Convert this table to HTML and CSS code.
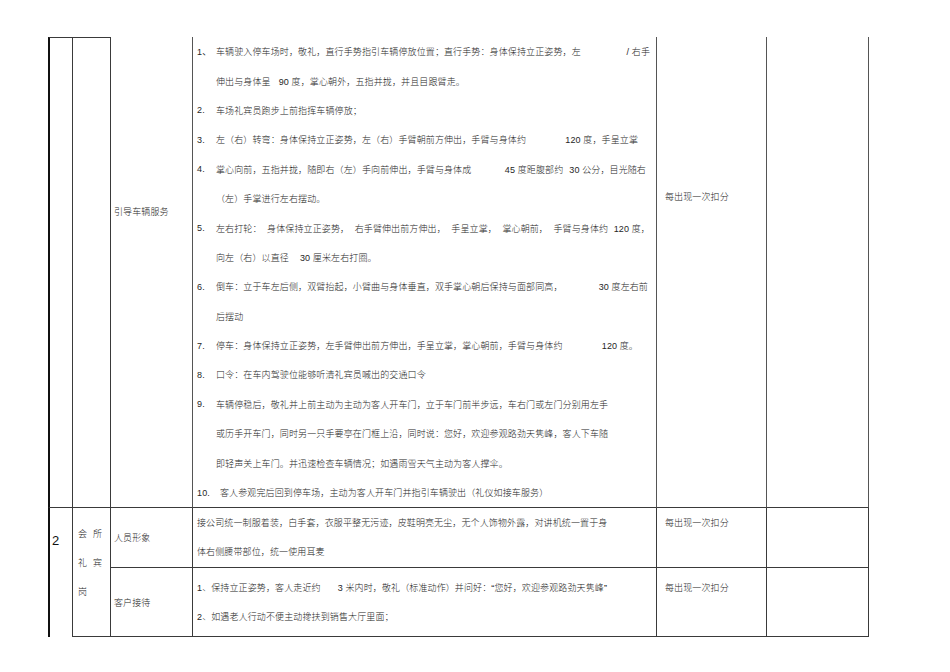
FILE: index.html
```html
<!DOCTYPE html>
<html lang="zh-CN">
<head>
<meta charset="utf-8">
<title>礼宾服务标准</title>
<link rel="stylesheet" href="styles.css">
</head>
<body>
<div class="sheet">
  <!-- Row 1 -->
  <div class="cell c1 r1 top"></div>
  <div class="cell c2 r1 top"></div>
  <div class="cell c3 r1 item-guide">引导车辆服务</div>
  <div class="cell c4 r1 steps">
    <div class="ln"><span class="num">1、</span><span class="tx split"><span>车辆驶入停车场时，敬礼，直行手势指引车辆停放位置；直行手势：身体保持立正姿势，左</span><span>/ 右手</span></span></div>
    <div class="ln cont"><span class="tx">伸出与身体呈<span class="g8"></span>90 度，掌心朝外，五指并拢，并且目跟臂走。</span></div>
    <div class="ln"><span class="num">2.</span><span class="tx">车场礼宾员跑步上前指挥车辆停放；</span></div>
    <div class="ln"><span class="num">3.</span><span class="tx split end12"><span>左（右）转弯：身体保持立正姿势，左（右）手臂朝前方伸出，手臂与身体约</span><span>120 度，手呈立掌</span></span></div>
    <div class="ln"><span class="num">4.</span><span class="tx split end4"><span>掌心向前，五指并拢，随即右（左）手向前伸出，手臂与身体成</span><span>45 度距腹部约<span class="g6"></span>30 公分，目光随右</span></span></div>
    <div class="ln cont"><span class="tx">（左）手掌进行左右摆动。</span></div>
    <div class="ln"><span class="num">5.</span><span class="tx split"><span>左右打轮：</span><span>身体保持立正姿势，</span><span>右手臂伸出前方伸出，</span><span>手呈立掌，</span><span>掌心朝前，</span><span>手臂与身体约</span><span>120 度，</span></span></div>
    <div class="ln cont"><span class="tx">向左（右）以直径<span class="g10"></span>30 厘米左右打圈。</span></div>
    <div class="ln"><span class="num">6.</span><span class="tx split end2"><span>倒车：立于车左后侧，双臂抬起，小臂曲与身体垂直，双手掌心朝后保持与面部同高，</span><span>30 度左右前</span></span></div>
    <div class="ln cont"><span class="tx">后摆动</span></div>
    <div class="ln"><span class="num">7.</span><span class="tx split end10"><span>停车：身体保持立正姿势，左手臂伸出前方伸出，手呈立掌，掌心朝前，手臂与身体约</span><span>120 度。</span></span></div>
    <div class="ln"><span class="num">8.</span><span class="tx">口令：在车内驾驶位能够听清礼宾员喊出的交通口令</span></div>
    <div class="ln"><span class="num">9.</span><span class="tx">车辆停稳后，敬礼并上前主动为主动为客人开车门，立于车门前半步远，车右门或左门分别用左手</span></div>
    <div class="ln cont"><span class="tx">或历手开车门，同时另一只手要亭在门框上沿，同时说：您好，欢迎参观路劲天隽峰，客人下车随</span></div>
    <div class="ln cont"><span class="tx">即轻声关上车门。并迅速检查车辆情况；如遇雨雪天气主动为客人撑伞。</span></div>
    <div class="ln"><span class="num wide">10.</span><span class="tx">客人参观完后回到停车场，主动为客人开车门并指引车辆驶出（礼仪如接车服务）</span></div>
  </div>
  <div class="cell c5 r1 penalty-guide">每出现一次扣分</div>
  <div class="cell c6 r1"></div>

  <!-- Row 2 -->
  <div class="cell c1 r2 no">2</div>
  <div class="cell c2 r2 post"><div>会所</div><div>礼宾</div><div>岗</div></div>
  <div class="cell c3 r2a item">人员形象</div>
  <div class="cell c4 r2a para first">
    <div>接公司统一制服着装，白手套，衣服平整无污迹，皮鞋明亮无尘，无个人饰物外露，对讲机统一置于身</div>
    <div>体右侧腰带部位，统一使用耳麦</div>
  </div>
  <div class="cell c5 r2a penalty first">每出现一次扣分</div>
  <div class="cell c6 r2a"></div>

  <div class="cell c3 r2b item">客户接待</div>
  <div class="cell c4 r2b para second">
    <div>1、保持立正姿势，客人走近约<span class="g16"></span>3 米内时，敬礼（标准动作）并问好：“您好，欢迎参观路劲天隽峰”</div>
    <div>2、如遇老人行动不便主动搀扶到销售大厅里面；</div>
  </div>
  <div class="cell c5 r2b penalty second">每出现一次扣分</div>
  <div class="cell c6 r2b"></div>
</div>
</body>
</html>
```

FILE: styles.css
```css
html, body {
  margin: 0;
  padding: 0;
  background: #ffffff;
}

body {
  font-family: "Liberation Sans", "Noto Sans CJK SC", sans-serif;
  font-size: 9px;
  font-weight: 300;
  letter-spacing: 0.12px;
  color: #262626;
}

.sheet {
  display: grid;
  grid-template-columns: 25px 38px 82px 464px 110px 102px;
  grid-template-rows: 471px 60px 69px;
  margin: 37px 0 0 48px;
  width: 821px;
}

.cell {
  box-sizing: border-box;
  border-right: 1px solid #3a3a3a;
  border-bottom: 1px solid #3a3a3a;
  min-width: 0;
}

.c1 { grid-column: 1; border-left: 2px solid #111; }
.c2 { grid-column: 2; }
.c3 { grid-column: 3; padding-left: 3px; }
.c4 { grid-column: 4; padding: 0 6px 0 4px; }
.c5 { grid-column: 5; padding-left: 8px; }
.c6 { grid-column: 6; }

.r1 { grid-row: 1; }
.r2 { grid-row: 2 / 4; }
.r2a { grid-row: 2; }
.r2b { grid-row: 3; }

.top { border-top: 1px solid #3a3a3a; }

.c3.r1, .c4.r1, .c5.r1, .c6.r1 { border-right-color: #555; }

/* row 1 */
.item-guide {
  padding-top: 168px;
  line-height: 14px;
}

.penalty-guide {
  padding-top: 153px;
  line-height: 14px;
}

.steps .ln {
  display: flex;
  align-items: center;
  height: 29.4px;
  white-space: nowrap;
}

.num {
  flex: none;
  width: 19px;
  font-weight: 400;
}

.num.wide { width: 23px; }

.ln.cont { padding-left: 19px; }

.tx { flex: 1; min-width: 0; }

.split {
  display: flex;
  justify-content: space-between;
}

.end2 { margin-right: 2px; }
.end4 { margin-right: 4px; }
.end10 { margin-right: 12px; }
.end12 { margin-right: 12px; }

.g6, .g8, .g10, .g16 { display: inline-block; }
.g6 { width: 6px; }
.g8 { width: 8px; }
.g10 { width: 11px; }
.g16 { width: 17px; }

/* row 2 */
.no {
  border-bottom: none;
  padding: 26px 0 0 2px;
  font-size: 13px;
  font-weight: 400;
  letter-spacing: 0;
  line-height: 14px;
  color: #111;
}

.post {
  padding: 12px 0 0 5px;
  line-height: 29px;
}

.post div { letter-spacing: 6px; }

.item {
  display: flex;
  align-items: center;
}

.para {
  line-height: 29px;
  white-space: nowrap;
}

.para.first { padding-top: 0.5px; }
.para.second { padding-top: 5.5px; }

.penalty { line-height: 14px; }
.penalty.first { padding-top: 8px; }
.penalty.second { padding-top: 13px; }
```
